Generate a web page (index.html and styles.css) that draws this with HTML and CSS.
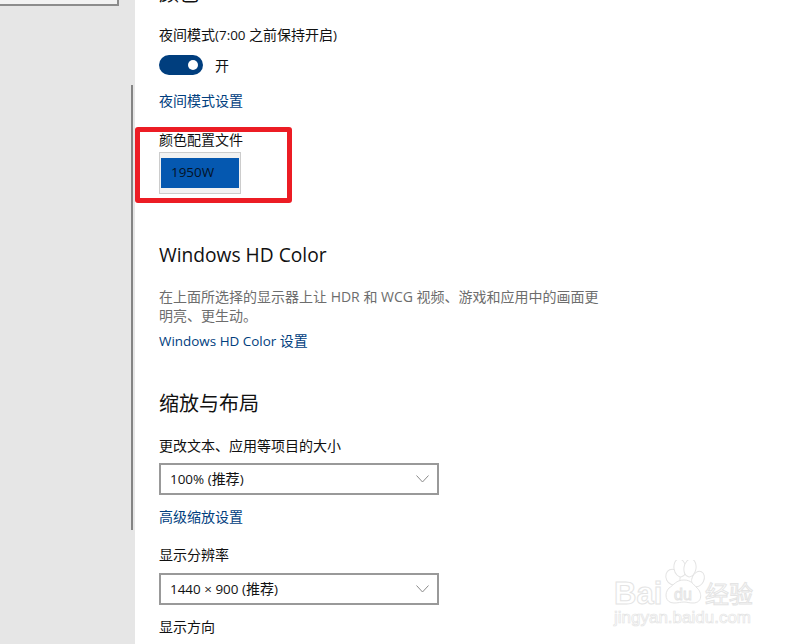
FILE: index.html
```html
<!DOCTYPE html>
<html lang="zh-CN">
<head>
<meta charset="utf-8">
<title>显示设置</title>
<link rel="stylesheet" href="styles.css">
</head>
<body>
<div class="app">
  <aside class="sidebar">
    <div class="side-box"></div>
    <div class="scrollbar"></div>
  </aside>
  <main class="content">
    <h2 class="heading first">颜色</h2>
    <div class="label night-label">夜间模式<span class="lat">(7:00 </span>之前保持开启<span class="lat">)</span></div>
    <div class="toggle-row">
      <span class="toggle"><span class="knob"></span></span>
      <span class="toggle-text">开</span>
    </div>
    <a class="link night-link">夜间模式设置</a>
    <div class="label profile-label">颜色配置文件</div>
    <div class="profile"><div class="profile-sel"><span class="lat">1950W</span></div></div>
    <h2 class="heading hd"><span class="lat">Windows HD Color</span></h2>
    <p class="desc">在上面所选择的显示器上让 HDR 和 WCG 视频、游戏和应用中的画面更明亮、更生动。</p>
    <a class="link hd-link"><span class="lat">Windows HD Color </span>设置</a>
    <h2 class="heading scale">缩放与布局</h2>
    <div class="label scale-label">更改文本、应用等项目的大小</div>
    <div class="select"><span class="select-text"><span class="lat">100% (</span>推荐<span class="lat">)</span></span>
      <svg class="chev" width="13" height="8" viewBox="0 0 13 8"><path d="M.5.5 6.500 7 12.500.5" fill="none" stroke="#8a8a8a" stroke-width="1"/></svg>
    </div>
    <a class="link adv-link">高级缩放设置</a>
    <div class="label res-label">显示分辨率</div>
    <div class="select res-select"><span class="select-text"><span class="lat">1440 × 900 (</span>推荐<span class="lat">)</span></span>
      <svg class="chev" width="13" height="8" viewBox="0 0 13 8"><path d="M.5.5 6.500 7 12.500.5" fill="none" stroke="#8a8a8a" stroke-width="1"/></svg>
    </div>
    <div class="label dir-label">显示方向</div>
  </main>
  <div class="annotation"></div>
  <div class="watermark">
    <svg class="paw" width="200" height="84" viewBox="0 0 200 84">
      <g fill="#fff" stroke="#e4e4e4" stroke-width="1">
        <ellipse cx="73" cy="17" rx="7" ry="8" transform="rotate(-25 73 17)"/>
        <ellipse cx="80" cy="8" rx="6" ry="9" transform="rotate(-10 80 8)"/>
        <ellipse cx="90" cy="8" rx="6" ry="9" transform="rotate(10 90 8)"/>
        <ellipse cx="98" cy="19" rx="6" ry="8" transform="rotate(25 98 19)"/>
        <path d="M84 20c7 0 9 4 13 8 5 4 6 15-4 15-4 0-6-1-9-1s-6 1-10 1c-9 0-10-10-5-15 5-3 7-8 15-8z"/>
      </g>
    </svg>
    <span class="wm-bai">Bai</span>
    <span class="wm-du">du</span>
    <span class="wm-cn">经验</span>
    <span class="wm-url">jingyan.baidu.com</span>
  </div>
</div>
</body>
</html>
```
FILE: styles.css
```css
* { box-sizing: border-box; }
html, body { margin: 0; padding: 0; }
body {
  width: 800px;
  height: 644px;
  overflow: hidden;
  background: #fff;
  font-family: "Open Sans", "Noto Sans CJK SC", sans-serif;
  font-size: 14px;
  color: #111;
}
.lat { font-size: .96em; }
.app { position: relative; display: flex; width: 800px; height: 644px; overflow: hidden; }
.sidebar { position: relative; flex: 0 0 135px; background: #e6e6e6; }
.side-box {
  width: 119px;
  height: 6px;
  background: #f2f2f2;
  border: solid #8c8c8c;
  border-width: 0 2px 2px 0;
}
.scrollbar { position: absolute; left: 131px; top: 85px; width: 2px; height: 445px; background: #848484; }
.content { flex: 1; padding-left: 24px; margin-top: -20px; }
.heading { margin: 0; font-weight: 400; font-size: 20px; line-height: 28px; color: #111; }
.label { line-height: 20px; }
.link { display: block; line-height: 20px; color: #003e7e; }
.night-label { margin-top: 17px; }
.toggle-row { display: flex; align-items: center; gap: 12px; margin-top: 10px; height: 20px; }
.toggle { position: relative; display: block; width: 44px; height: 20px; border-radius: 10px; background: #003e7e; }
.knob { position: absolute; left: 29px; top: 5px; width: 10px; height: 10px; border-radius: 50%; background: #fff; }
.night-link { margin-top: 16px; }
.profile-label { margin-top: 19px; }
.profile { width: 82px; height: 42px; margin-top: 2px; padding: 5px 1px; background: #f2f2f2; border: 1px solid #ccc; }
.profile-sel { height: 30px; padding-left: 10px; line-height: 28px; background: #0558b0; color: #041226; }
.hd { margin-top: 47px; }
.desc { width: 448px; margin: 18px 0 0; line-height: 19px; color: #6d6d6d; }
.hd-link { margin-top: 6px; }
.scale { margin-top: 39px; }
.scale-label { margin-top: 18px; }
.select {
  display: flex;
  align-items: center;
  justify-content: space-between;
  width: 280px;
  height: 32px;
  margin-top: 7px;
  padding: 0 8px 0 9px;
  border: 2px solid #999;
  background: #fff;
}
.select-text { margin-top: -2px; }
.adv-link { margin-top: 12px; }
.res-label { margin-top: 18px; }
.res-select { margin-top: 8px; }
.dir-label { margin-top: 12px; }
.annotation { position: absolute; left: 135px; top: 127px; width: 157px; height: 76px; border: 5px solid #ec1c24; border-radius: 3px; }
.watermark { position: absolute; left: 600px; top: 560px; width: 200px; height: 84px; }
.paw { position: absolute; left: 0; top: 0; }
.wm-bai, .wm-du, .wm-cn, .wm-url {
  position: absolute;
  color: #fff;
  -webkit-text-stroke: 1px #e4e4e4;
  font-family: "Liberation Sans", sans-serif;
}
.wm-bai { left: 14px; top: 19px; font-size: 31px; font-weight: 700; line-height: 30px; }
.wm-du { left: 74px; top: 26px; font-size: 16px; line-height: 18px; }
.wm-cn { left: 105px; top: 18px; font-size: 24px; line-height: 30px; font-family: "Noto Sans CJK SC", sans-serif; }
.wm-url { left: 14px; top: 48px; font-size: 17px; line-height: 20px; -webkit-text-stroke-width: .7px; }
```
